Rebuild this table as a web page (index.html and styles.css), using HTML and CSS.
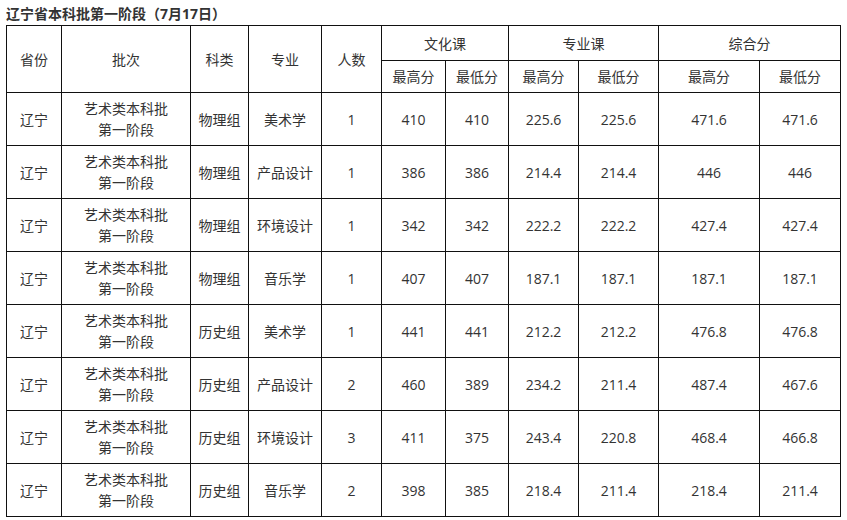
FILE: index.html
```html
<!DOCTYPE html>
<html lang="zh-CN">
<head>
<meta charset="utf-8">
<title>辽宁省本科批第一阶段</title>
<link rel="stylesheet" href="styles.css">
</head>
<body>
<div class="page">
  <h1 class="title">辽宁省本科批第一阶段（7月17日）</h1>
  <table class="score-table">
    <colgroup>
      <col class="c-prov"><col class="c-batch"><col class="c-type"><col class="c-major"><col class="c-num">
      <col class="c-a"><col class="c-b"><col class="c-c"><col class="c-d"><col class="c-e"><col class="c-f">
    </colgroup>
    <thead>
      <tr class="h1">
        <th rowspan="2">省份</th>
        <th rowspan="2">批次</th>
        <th rowspan="2">科类</th>
        <th rowspan="2">专业</th>
        <th rowspan="2">人数</th>
        <th colspan="2">文化课</th>
        <th colspan="2">专业课</th>
        <th colspan="2">综合分</th>
      </tr>
      <tr class="h2">
        <th>最高分</th><th>最低分</th>
        <th>最高分</th><th>最低分</th>
        <th>最高分</th><th>最低分</th>
      </tr>
    </thead>
    <tbody>
      <tr><td>辽宁</td><td>艺术类本科批<br>第一阶段</td><td>物理组</td><td>美术学</td><td>1</td><td>410</td><td>410</td><td>225.6</td><td>225.6</td><td>471.6</td><td>471.6</td></tr>
      <tr><td>辽宁</td><td>艺术类本科批<br>第一阶段</td><td>物理组</td><td>产品设计</td><td>1</td><td>386</td><td>386</td><td>214.4</td><td>214.4</td><td>446</td><td>446</td></tr>
      <tr><td>辽宁</td><td>艺术类本科批<br>第一阶段</td><td>物理组</td><td>环境设计</td><td>1</td><td>342</td><td>342</td><td>222.2</td><td>222.2</td><td>427.4</td><td>427.4</td></tr>
      <tr><td>辽宁</td><td>艺术类本科批<br>第一阶段</td><td>物理组</td><td>音乐学</td><td>1</td><td>407</td><td>407</td><td>187.1</td><td>187.1</td><td>187.1</td><td>187.1</td></tr>
      <tr><td>辽宁</td><td>艺术类本科批<br>第一阶段</td><td>历史组</td><td>美术学</td><td>1</td><td>441</td><td>441</td><td>212.2</td><td>212.2</td><td>476.8</td><td>476.8</td></tr>
      <tr><td>辽宁</td><td>艺术类本科批<br>第一阶段</td><td>历史组</td><td>产品设计</td><td>2</td><td>460</td><td>389</td><td>234.2</td><td>211.4</td><td>487.4</td><td>467.6</td></tr>
      <tr><td>辽宁</td><td>艺术类本科批<br>第一阶段</td><td>历史组</td><td>环境设计</td><td>3</td><td>411</td><td>375</td><td>243.4</td><td>220.8</td><td>468.4</td><td>466.8</td></tr>
      <tr><td>辽宁</td><td>艺术类本科批<br>第一阶段</td><td>历史组</td><td>音乐学</td><td>2</td><td>398</td><td>385</td><td>218.4</td><td>211.4</td><td>218.4</td><td>211.4</td></tr>
    </tbody>
  </table>
</div>
</body>
</html>
```
FILE: styles.css
```css
html, body {
  margin: 0;
  padding: 0;
  background: #fff;
}
body {
  font-family: "Open Sans", "Noto Sans CJK SC", sans-serif;
  color: #333;
  font-size: 14px;
}
.page {
  padding: 4px 6px 0 6px;
}
.title {
  margin: 0;
  font-size: 14px;
  font-weight: bold;
  line-height: 20px;
  height: 21px;
  color: #333;
}
.score-table {
  border-collapse: collapse;
  table-layout: fixed;
  width: 835px;
}
.score-table th,
.score-table td {
  border: 1px solid #111;
  padding: 0;
  text-align: center;
  vertical-align: middle;
  font-weight: normal;
  line-height: 21px;
  color: #333;
}
.score-table tr.h1 { height: 35px; }
.score-table tr.h2 { height: 32px; }
.score-table tbody tr { height: 53px; }
.c-prov { width: 55px; }
.c-batch { width: 129px; }
.c-type { width: 58px; }
.c-major { width: 73px; }
.c-num { width: 60px; }
.c-a { width: 64px; }
.c-b { width: 63px; }
.c-c { width: 70px; }
.c-d { width: 80px; }
.c-e { width: 101px; }
.c-f { width: 81px; }
```
